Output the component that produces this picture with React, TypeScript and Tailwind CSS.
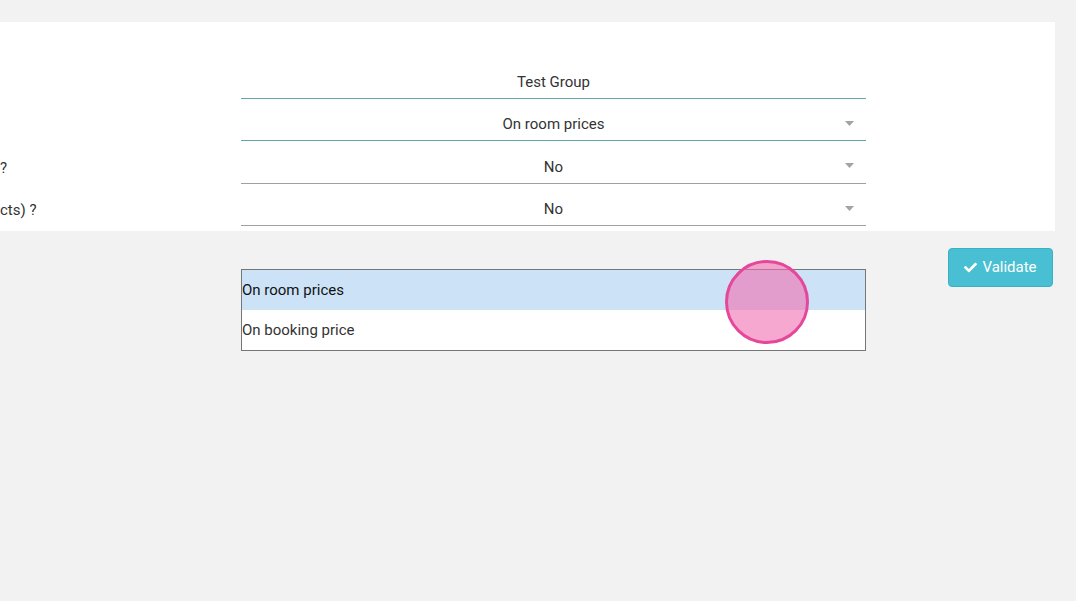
import { FaCheck } from 'react-icons/fa';

const ROWS = [
  { label: '', value: 'Test Group', select: false, active: true, h: 'h-[42px]' },
  { label: '', value: 'On room prices', select: true, active: true, h: 'h-[42px]' },
  { label: '?', value: 'No', select: true, active: false, h: 'h-[43px]' },
  { label: 'cts) ?', value: 'No', select: true, active: false, h: 'h-[42px]' },
];

function Caret() {
  return (
    <svg width="9" height="5" viewBox="0 0 9 5" className="absolute right-[12px] top-[22px]">
      <path d="M0 0 L9 0 L4.5 5 Z" fill="#a3a3a3" />
    </svg>
  );
}

export default function App() {
  return (
    <div
      className="min-h-[601px] w-full bg-[#f2f2f2] text-[15px] text-[#333]"
      style={{ fontFamily: 'Roboto, "Liberation Sans", sans-serif' }}
    >
      <div className="h-[22px]" />
      <section className="mr-[21px] flex flex-col bg-white pb-[5px] pt-[35px]">
        {ROWS.map((row, i) => (
          <div key={i} className={`flex items-stretch ${row.h}`}>
            <div className="flex w-[241px] items-end pb-[5px]">{row.label}</div>
            <div
              className={`relative flex w-[625px] items-end justify-center border-b pb-[5px] ${
                row.active ? 'border-[#5fa8b3]' : 'border-[#a0a0a0]'
              }`}
            >
              {row.value}
              {row.select && <Caret />}
            </div>
          </div>
        ))}
      </section>

      <div className="flex items-start">
        <div className="w-[241px]" />
        <div className="relative mt-[38px] w-[625px] border border-[#767676] bg-white">
          <div className="flex h-[40px] items-center bg-[#cce3f7] text-[#111]">On room prices</div>
          <div className="flex h-[40px] items-center">On booking price</div>
          <div className="absolute left-[483px] top-[-10px] h-[84px] w-[84px] rounded-full border-[3px] border-[#e5489a] bg-[#f06eb0]/60" />
        </div>
        <div className="ml-auto mr-[23px] mt-[17px]">
          <button
            type="button"
            className="flex h-[39px] w-[105px] items-center justify-center gap-[5px] rounded-[4px] border border-[#3bb0c3] bg-[#48bfd3] text-[15px] text-white"
          >
            <FaCheck className="h-[13px] w-[13px]" />
            Validate
          </button>
        </div>
      </div>
    </div>
  );
}
